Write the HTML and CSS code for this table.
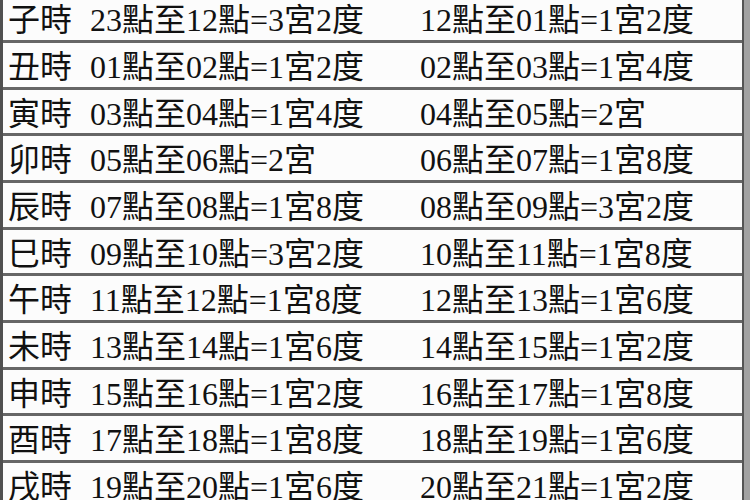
FILE: index.html
```html
<!DOCTYPE html>
<html lang="zh-Hant">
<head>
<meta charset="utf-8">
<title>時辰宮度表</title>
<link rel="stylesheet" href="styles.css">
</head>
<body>
<div class="sheet">
  <div class="table">
    <div class="row"><span class="hour">子時</span><span class="c2">23點至12點=3宮2度</span><span class="c3">12點至01點=1宮2度</span></div>
    <div class="row"><span class="hour">丑時</span><span class="c2">01點至02點=1宮2度</span><span class="c3">02點至03點=1宮4度</span></div>
    <div class="row"><span class="hour">寅時</span><span class="c2">03點至04點=1宮4度</span><span class="c3">04點至05點=2宮</span></div>
    <div class="row"><span class="hour">卯時</span><span class="c2">05點至06點=2宮</span><span class="c3">06點至07點=1宮8度</span></div>
    <div class="row"><span class="hour">辰時</span><span class="c2">07點至08點=1宮8度</span><span class="c3">08點至09點=3宮2度</span></div>
    <div class="row"><span class="hour">巳時</span><span class="c2">09點至10點=3宮2度</span><span class="c3">10點至11點=1宮8度</span></div>
    <div class="row"><span class="hour">午時</span><span class="c2">11點至12點=1宮8度</span><span class="c3">12點至13點=1宮6度</span></div>
    <div class="row"><span class="hour">未時</span><span class="c2">13點至14點=1宮6度</span><span class="c3">14點至15點=1宮2度</span></div>
    <div class="row"><span class="hour">申時</span><span class="c2">15點至16點=1宮2度</span><span class="c3">16點至17點=1宮8度</span></div>
    <div class="row"><span class="hour">酉時</span><span class="c2">17點至18點=1宮8度</span><span class="c3">18點至19點=1宮6度</span></div>
    <div class="row"><span class="hour">戌時</span><span class="c2">19點至20點=1宮6度</span><span class="c3">20點至21點=1宮2度</span></div>
  </div>
</div>
</body>
</html>
```
FILE: styles.css
```css
html, body {
  margin: 0;
  padding: 0;
  background: #ffffff;
  overflow: hidden;
}

body {
  width: 750px;
  height: 500px;
}

.sheet {
  display: flex;
  width: 750px;
  box-sizing: border-box;
  border-right: 6px solid #a2a2a2;
  margin-top: -3.67px;
}

.table {
  flex: 1;
  border-left: 3px solid #505050;
  border-right: 2px solid #555555;
  background: #fcfcfc;
}

.row {
  display: grid;
  grid-template-columns: 82px 330px 1fr;
  height: 43.67px;
  box-sizing: content-box;
  padding-left: 5px;
  border-bottom: 3px solid #666666;
  font-family: "Liberation Serif", "Noto Sans CJK TC", serif;
  font-size: 32px;
  line-height: 43.67px;
  color: #111111;
  white-space: nowrap;
  overflow: hidden;
}

.row span {
  display: block;
  padding-top: 3px;
}
```
